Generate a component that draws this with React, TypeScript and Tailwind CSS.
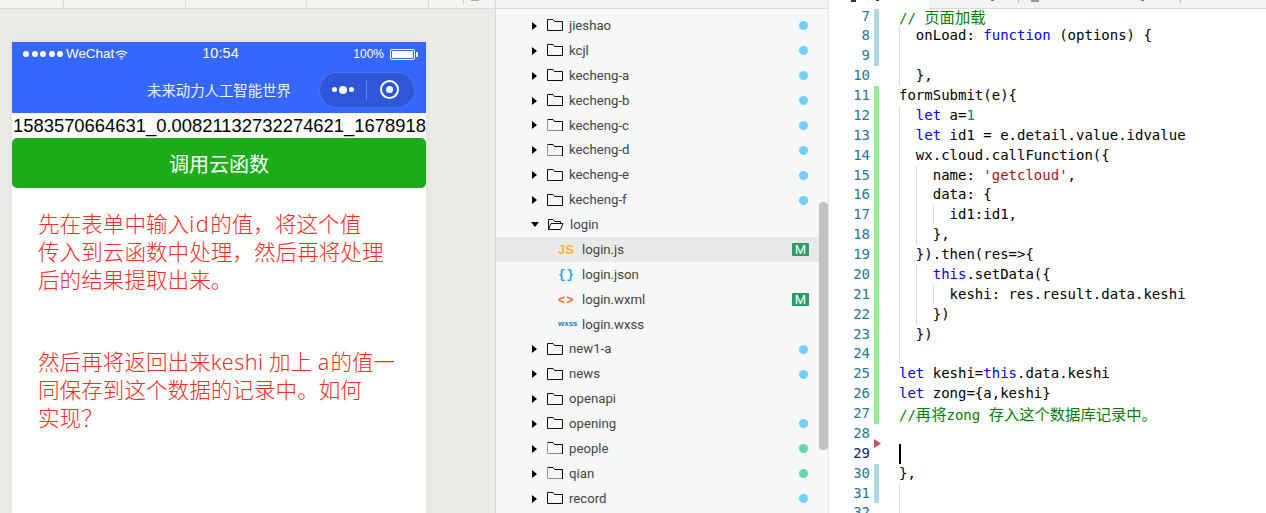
const mono = "font-['DejaVu_Sans_Mono','Liberation_Mono',monospace]";

type Token = { t: string; c?: string; zh?: boolean };
type Line = { n: number; indent: number; guides: number; tokens: Token[]; bar?: 'blue' | 'green' };

const kw = 'text-[#0000ff]';
const str = 'text-[#a31515]';
const num = 'text-[#098658]';
const cm = 'text-[#008000]';

const lines: Line[] = [
  { n: 7, indent: 0, guides: 0, bar: 'blue', tokens: [{ t: '// ', c: cm }, { t: '页面加载', c: cm, zh: true }] },
  { n: 8, indent: 1, guides: 1, bar: 'blue', tokens: [{ t: 'onLoad: ' }, { t: 'function', c: kw }, { t: ' (options) {' }] },
  { n: 9, indent: 1, guides: 1, bar: 'blue', tokens: [] },
  { n: 10, indent: 1, guides: 1, tokens: [{ t: '},' }] },
  { n: 11, indent: 0, guides: 0, bar: 'green', tokens: [{ t: 'formSubmit(e){' }] },
  { n: 12, indent: 1, guides: 1, bar: 'green', tokens: [{ t: 'let', c: kw }, { t: ' a=' }, { t: '1', c: num }] },
  { n: 13, indent: 1, guides: 1, bar: 'green', tokens: [{ t: 'let', c: kw }, { t: ' id1 = e.detail.value.idvalue' }] },
  { n: 14, indent: 1, guides: 1, bar: 'green', tokens: [{ t: 'wx.cloud.callFunction({' }] },
  { n: 15, indent: 2, guides: 2, bar: 'green', tokens: [{ t: 'name: ' }, { t: "'getcloud'", c: str }, { t: ',' }] },
  { n: 16, indent: 2, guides: 2, bar: 'green', tokens: [{ t: 'data: {' }] },
  { n: 17, indent: 3, guides: 3, bar: 'green', tokens: [{ t: 'id1:id1,' }] },
  { n: 18, indent: 2, guides: 2, bar: 'green', tokens: [{ t: '},' }] },
  { n: 19, indent: 1, guides: 1, bar: 'green', tokens: [{ t: '}).then(res=>{' }] },
  { n: 20, indent: 2, guides: 2, bar: 'green', tokens: [{ t: 'this', c: kw }, { t: '.setData({' }] },
  { n: 21, indent: 3, guides: 3, bar: 'green', tokens: [{ t: 'keshi: res.result.data.keshi' }] },
  { n: 22, indent: 2, guides: 2, bar: 'green', tokens: [{ t: '})' }] },
  { n: 23, indent: 1, guides: 1, bar: 'green', tokens: [{ t: '})' }] },
  { n: 24, indent: 1, guides: 1, bar: 'green', tokens: [] },
  { n: 25, indent: 0, guides: 0, bar: 'green', tokens: [{ t: 'let', c: kw }, { t: ' keshi=' }, { t: 'this', c: kw }, { t: '.data.keshi' }] },
  { n: 26, indent: 0, guides: 0, bar: 'green', tokens: [{ t: 'let', c: kw }, { t: ' zong={a,keshi}' }] },
  {
    n: 27,
    indent: 0,
    guides: 0,
    bar: 'green',
    tokens: [
      { t: '//', c: cm },
      { t: '再将', c: cm, zh: true },
      { t: 'zong ', c: cm },
      { t: '存入这个数据库记录中。', c: cm, zh: true },
    ],
  },
  { n: 28, indent: 0, guides: 0, tokens: [] },
  { n: 29, indent: 0, guides: 0, tokens: [] },
  { n: 30, indent: 0, guides: 0, bar: 'blue', tokens: [{ t: '},' }] },
  { n: 31, indent: 1, guides: 1, bar: 'blue', tokens: [] },
  { n: 32, indent: 1, guides: 1, tokens: [] },
];

type TreeItem = {
  name: string;
  dot?: 'blue' | 'green';
  kind?: 'plain' | 'shaded' | 'open';
};

const before: TreeItem[] = [
  { name: 'jieshao', dot: 'blue' },
  { name: 'kcjl', dot: 'blue' },
  { name: 'kecheng-a', dot: 'blue' },
  { name: 'kecheng-b', dot: 'blue' },
  { name: 'kecheng-c', dot: 'blue', kind: 'shaded' },
  { name: 'kecheng-d', dot: 'blue', kind: 'shaded' },
  { name: 'kecheng-e', dot: 'blue' },
  { name: 'kecheng-f', dot: 'blue' },
];

const after: TreeItem[] = [
  { name: 'new1-a', dot: 'blue' },
  { name: 'news', dot: 'blue' },
  { name: 'openapi' },
  { name: 'opening', dot: 'blue' },
  { name: 'people', dot: 'green', kind: 'shaded' },
  { name: 'qian', dot: 'green', kind: 'shaded' },
  { name: 'record', dot: 'blue' },
];

function FolderIcon({ kind = 'plain' }: { kind?: 'plain' | 'shaded' | 'open' }) {
  if (kind === 'open') {
    return (
      <svg width="17" height="13" viewBox="0 0 17 13" fill="none" stroke="#111" strokeWidth="1">
        <path d="M1.5 11.5V1.5H6L7.5 3.5H13.5V5.5" />
        <path d="M1.5 11.5L4 5.5H16L13.5 11.5Z" />
      </svg>
    );
  }
  if (kind === 'shaded') {
    return (
      <svg width="17" height="13" viewBox="0 0 17 13" fill="none" strokeWidth="1">
        <path d="M0.5 11.5V1" stroke="#999" />
        <path d="M0.5 11.5H15.5" stroke="#888" />
        <path d="M0.5 0.5H6L7.5 2.5H15.5V12" stroke="#000" />
      </svg>
    );
  }
  return (
    <svg width="17" height="13" viewBox="0 0 17 13" fill="none" stroke="#111" strokeWidth="1">
      <path d="M0.5 11.5V0.5H6L7.5 2.5H15.5V11.5Z" />
    </svg>
  );
}

function Dot({ color }: { color: 'blue' | 'green' }) {
  return <span className={color === 'blue' ? 'w-[9px] h-[9px] rounded-full bg-[#75cdfd]' : 'w-[9px] h-[9px] rounded-full bg-[#65d8a9]'} />;
}

function FolderRow({ item }: { item: TreeItem }) {
  return (
    <div className="flex items-center h-[24.875px] pl-[36px] pr-[20px]">
      <span className="w-0 h-0 border-y-[4px] border-y-transparent border-l-[5px] border-l-black" />
      <span className="ml-[10px] flex items-center">
        <FolderIcon kind={item.kind} />
      </span>
      <span className="ml-[5px] text-[#444] flex-1">{item.name}</span>
      {item.dot && <Dot color={item.dot} />}
    </div>
  );
}

function FileRow({ icon, name, modified, active }: { icon: React.ReactNode; name: string; modified?: boolean; active?: boolean }) {
  return (
    <div className={active ? 'flex items-center h-[24.875px] pl-[62px] pr-[19px] bg-[#e8e9e9]' : 'flex items-center h-[24.875px] pl-[62px] pr-[19px]'}>
      <span className="w-[24px] flex items-center">{icon}</span>
      <span className="text-[#444] flex-1">{name}</span>
      {modified && (
        <span className="w-[17px] h-[13px] rounded-[1px] bg-[#2a9d63] text-white text-[13px] leading-[13px] text-center">M</span>
      )}
    </div>
  );
}

function WifiIcon() {
  return (
    <svg width="13" height="10" viewBox="0 0 13 10" fill="none" stroke="white" strokeWidth="1.2">
      <path d="M0.8 3.2C4 0.3 9 0.3 12.2 3.2" />
      <path d="M2.7 5.2C4.9 3.3 8.1 3.3 10.3 5.2" />
      <path d="M4.6 7.2C5.7 6.4 7.3 6.4 8.4 7.2" />
      <path d="M6.5 9.8L5.3 8.6C6 8.1 7 8.1 7.7 8.6Z" fill="white" stroke="none" />
    </svg>
  );
}

function Phone() {
  return (
    <div className="w-[414px] h-[471px] bg-white shadow-[0_0_6px_rgba(0,0,0,0.06)] font-['Noto_Sans_CJK_SC','Liberation_Sans',sans-serif]">
      <div className="bg-[#3567fe] text-white h-[71px]">
        <div className="grid grid-cols-3 items-center h-[24px] pl-[11px] pr-[8px] font-['Liberation_Sans','Noto_Sans_CJK_SC',sans-serif]">
          <div className="flex items-center">
            <span className="flex gap-[2.5px]">
              {[0, 1, 2, 3, 4].map((i) => (
                <span key={i} className="w-[6px] h-[6px] rounded-full bg-white" />
              ))}
            </span>
            <span className="ml-[3px] text-[13.4px] leading-[24px]">WeChat</span>
            <span className="flex items-center ml-[1px] translate-y-px">
              <WifiIcon />
            </span>
          </div>
          <div className="text-center text-[14.4px] tracking-[0.1px]">10:54</div>
          <div className="flex items-center justify-end">
            <span className="text-[12px]">100%</span>
            <span className="ml-[6px] flex items-center">
              <span className="w-[25px] h-[11px] rounded-[2px] border border-white p-[1px]">
                <span className="block h-full w-full rounded-[1px] bg-white" />
              </span>
              <span className="ml-[1px] w-[2px] h-[5px] rounded-r-[1px] bg-white" />
            </span>
          </div>
        </div>
        <div className="flex items-center justify-between h-[47px] pl-[135px] pr-[11px]">
          <span className="text-[14.4px] leading-[20px] text-[#eef1ff] whitespace-nowrap">未来动力人工智能世界</span>
          <span className="flex items-center w-[96px] h-[36px] rounded-full border border-white/15 bg-black/15">
            <span className="flex items-center gap-[2px] ml-[12px]">
              <span className="w-[5px] h-[5px] rounded-full bg-white" />
              <span className="w-[8px] h-[8px] rounded-full bg-white" />
              <span className="w-[5px] h-[5px] rounded-full bg-white" />
            </span>
            <span className="ml-[12px] w-px h-[20px] bg-white/25" />
            <span className="ml-[13px] flex items-center justify-center w-[19px] h-[19px] rounded-full border-2 border-white">
              <span className="w-[7px] h-[7px] rounded-full bg-white" />
            </span>
          </span>
        </div>
      </div>
      <div className="h-[25px] overflow-hidden whitespace-nowrap pl-[1px] text-[18.4px] leading-[25px] text-black font-['Liberation_Sans',sans-serif]">
        1583570664631_0.00821132732274621_1678918
      </div>
      <div className="flex items-center justify-center h-[50px] pt-px rounded-[5px] bg-[#1aad19] text-white text-[20px]">调用云函数</div>
      <div className="pt-[22px] pl-[26px] text-[21.6px] leading-[28px] font-light text-[#ff2a20] whitespace-nowrap font-['Noto_Sans','Noto_Sans_CJK_SC',sans-serif]">
        <p>
          先在表单中输入<span className="tracking-[1.5px]">id</span>的值，将这个值
          <br />
          传入到云函数中处理，然后再将处理
          <br />
          后的结果提取出来。
        </p>
        <p className="mt-[54px]">
          然后再将返回出来<span className="tracking-[0.4px]">keshi</span> 加上 <span className="tracking-[1px]">a</span>的值一
          <br />
          同保存到这个数据的记录中。如何
          <br />
          实现？
        </p>
      </div>
    </div>
  );
}

function Tree() {
  return (
    <div className="relative w-[332px] h-full overflow-hidden bg-[#f6f8f8] pt-[4.5px] text-[13.2px] font-['Roboto','Liberation_Sans',sans-serif]">
      {before.map((item) => (
        <FolderRow key={item.name} item={item} />
      ))}
      <div className="flex items-center h-[24.875px] pl-[35px]">
        <span className="w-0 h-0 border-x-[4px] border-x-transparent border-t-[5px] border-t-black" />
        <span className="ml-[8px] flex items-center">
          <FolderIcon kind="open" />
        </span>
        <span className="ml-[6px] text-[#444]">login</span>
      </div>
      <FileRow
        active
        modified
        name="login.js"
        icon={<span className="text-[13px] leading-none font-bold text-[#f7b52c] font-['Liberation_Sans',sans-serif]">JS</span>}
      />
      <FileRow
        name="login.json"
        icon={<span className="text-[13px] leading-none font-bold text-[#1fa7ee] tracking-[0.5px] font-['Liberation_Mono',monospace]">{'{}'}</span>}
      />
      <FileRow
        modified
        name="login.wxml"
        icon={<span className="text-[12px] leading-none font-bold text-[#f26b2b] tracking-[1.5px] font-['Liberation_Sans',sans-serif]">{'<>'}</span>}
      />
      <FileRow
        name="login.wxss"
        icon={<span className="text-[8px] leading-none font-bold text-[#1c7cc7] font-['Liberation_Sans',sans-serif]">wxss</span>}
      />
      {after.map((item) => (
        <FolderRow key={item.name} item={item} />
      ))}
      <div className="absolute top-[193px] right-0 w-[9px] h-[248px] rounded-[4px] bg-[#c1c1c1]" />
    </div>
  );
}

function CodeRow({ line }: { line: Line }) {
  return (
    <div className="flex h-[19.875px] leading-[19.875px]">
      <span className={line.n === 29 ? 'w-[41px] text-right text-[#0b216f]' : 'w-[41px] text-right text-[#237893]'}>{line.n}</span>
      <span className={line.bar === 'blue' ? 'ml-[4px] w-[5px] bg-[#add6e6]' : line.bar === 'green' ? 'ml-[4px] w-[5px] bg-[#90ee90]' : 'ml-[4px] w-[5px]'} />
      <span className="w-[20px]" />
      {Array.from({ length: line.indent }).map((_, i) => (
        <span key={i} className={i < line.guides ? 'w-[16.86px] border-l border-[#d9d9d9]' : 'w-[16.86px]'} />
      ))}
      {line.n === 29 && <span className="w-[2px] bg-black" />}
      <span className="whitespace-pre text-black">
        {line.tokens.map((tok, i) => (
          <span key={i} className={tok.zh ? `${tok.c ?? ''} text-[15.3px] font-['Noto_Sans_CJK_SC',sans-serif]` : tok.c}>
            {tok.t}
          </span>
        ))}
      </span>
    </div>
  );
}

function Editor() {
  return (
    <div className={`relative flex-1 h-full overflow-hidden bg-white text-[14px] border-l border-[#e4e4e4] ${mono}`}>
      <div className="-mt-[2.4px]">
        {lines.map((line) => (
          <CodeRow key={line.n} line={line} />
        ))}
      </div>
      <svg className="absolute left-[45px] top-[430px]" width="7" height="9" viewBox="0 0 7 9">
        <path d="M0 0L7 4.5L0 9Z" fill="#c8505f" />
      </svg>
    </div>
  );
}

export default function App() {
  return (
    <div className="w-[1266px] h-[513px] overflow-hidden flex flex-col bg-white">
      {/* top strip, mostly cut off by the screenshot */}
      <div className="flex h-[9px] shrink-0 bg-[#f3f3f3]">
        <div className="w-[64px] border-r border-b border-[#d9d9d9]" />
        <div className="w-[122px] border-r border-b border-[#d9d9d9]" />
        <div className="w-[121px] border-r border-b border-[#d9d9d9]" />
        <div className="w-[122px] border-r border-b border-[#d9d9d9]" />
        <div className="flex w-[67px] border-r border-b border-[#d9d9d9] pl-[34px]">
          <span className="w-px h-[4px] bg-[#cccccc]" />
          <span className="ml-[7px] w-[8px] h-[1px] bg-[#aaaaaa]" />
        </div>
        <div className="w-[332px] border-b border-[#d9d9d9]" />
        <div className="flex w-[101px] bg-white border-l border-[#e4e4e4] pl-[22px] gap-[20px]">
          <span className="w-[5px] h-[2px] bg-[#333333]" />
          <span className="w-[3px] h-[1px] bg-[#333333]" />
        </div>
        <div className="flex flex-1 border-b border-[#d9d9d9] pl-[62px]">
          <span className="w-[3px] h-[1px] bg-[#777777]" />
          <span className="ml-[24px] w-px h-[3px] bg-[#bbbbbb]" />
          <span className="ml-[12px] w-[8px] h-[2px] bg-[#999999]" />
          <span className="ml-[102px] w-[3px] h-[1px] bg-[#777777]" />
          <span className="ml-[36px] w-px h-[3px] bg-[#bbbbbb]" />
        </div>
      </div>
      <div className="flex flex-1 min-h-0">
        <div className="w-[496px] h-full overflow-hidden bg-[#ebeae7] border-r border-[#d4d4d4] pt-[33px] pl-[12px]">
          <Phone />
        </div>
        <Tree />
        <Editor />
      </div>
    </div>
  );
}
